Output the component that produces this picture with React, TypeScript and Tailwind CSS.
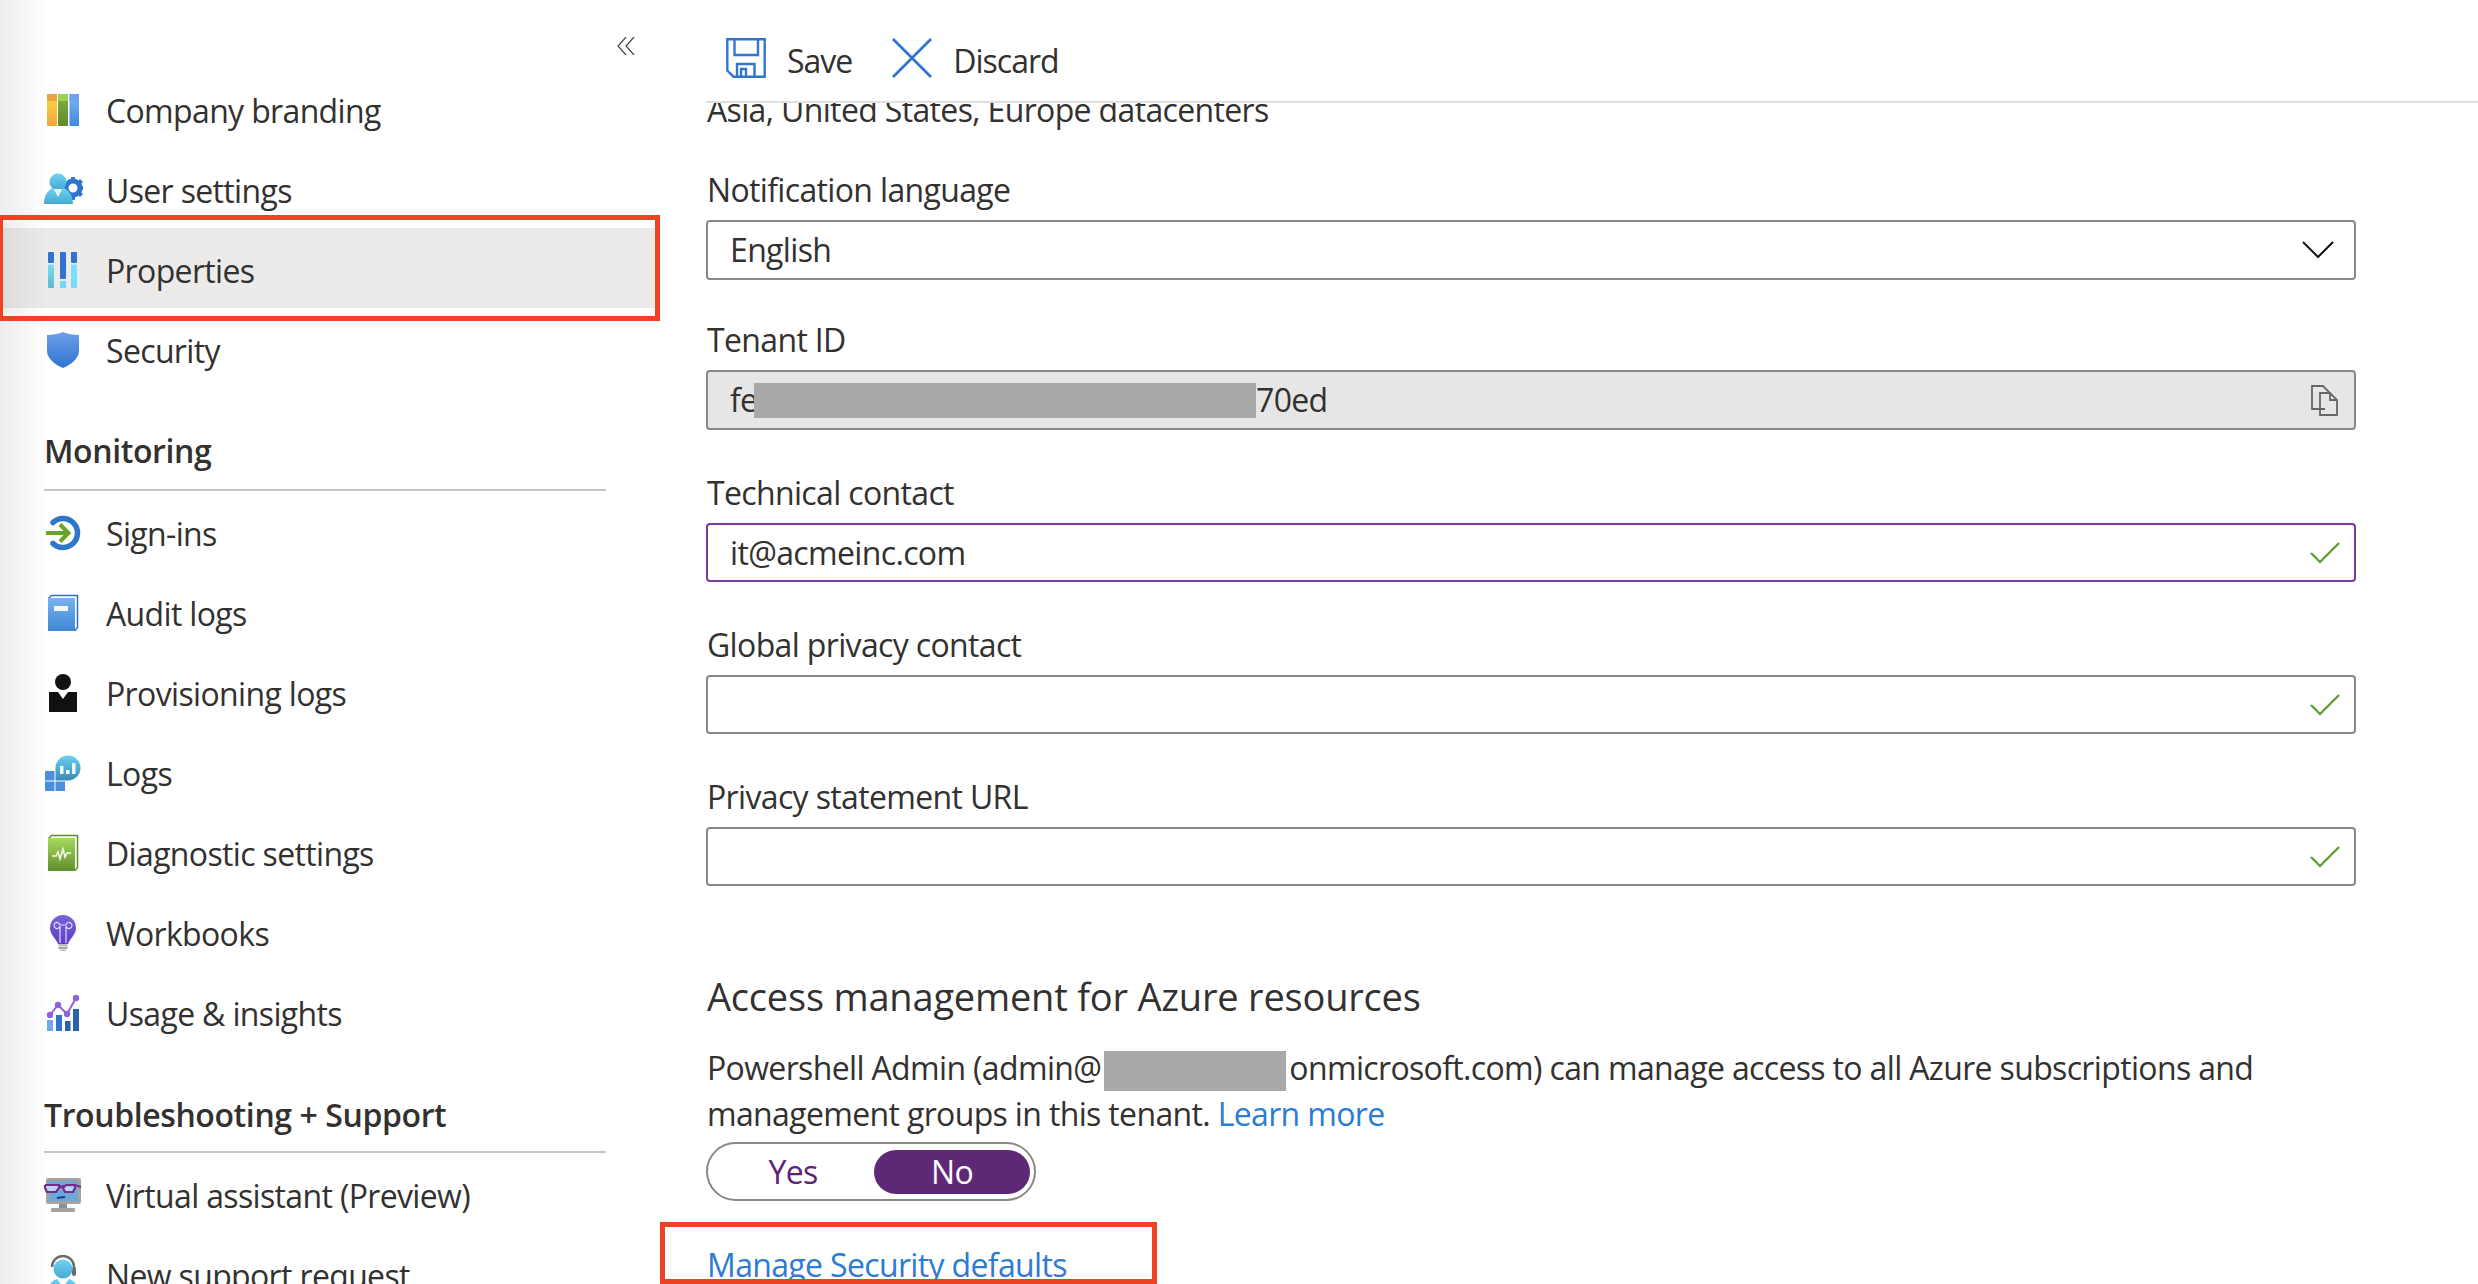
// Azure AD properties blade
import type { ReactNode } from "react"

const Svg = ({ children }: { children: ReactNode }) => (
    <svg width="40" height="40" viewBox="0 0 40 40" className="shrink-0">
        {children}
    </svg>
)

const Grad = ({ id, from, to }: { id: string; from: string; to: string }) => (
    <linearGradient id={id} x1="0" y1="0" x2="0" y2="1">
        <stop offset="0" stopColor={from} />
        <stop offset="1" stopColor={to} />
    </linearGradient>
)

const BrandingIcon = () => (
    <Svg>
        <defs>
            <Grad id="br1" from="#f9dc48" to="#f2a53a" />
            <Grad id="br2" from="#86b13f" to="#5c8a2c" />
            <Grad id="br3" from="#7cb6ee" to="#3d88e0" />
        </defs>
        <rect x="4" y="4" width="10" height="32" rx="1" fill="url(#br1)" />
        <rect x="4" y="4" width="10" height="7" fill="#eba43d" />
        <rect x="15" y="4" width="10" height="32" rx="1" fill="url(#br2)" />
        <rect x="15" y="4" width="10" height="7" fill="#97d350" />
        <rect x="26.500" y="4" width="9.500" height="32" rx="1" fill="url(#br3)" />
        <rect x="26.500" y="4" width="9.500" height="7" fill="#6da3ec" />
    </Svg>
)

const UserSettingsIcon = () => (
    <Svg>
        <defs>
            <Grad id="us1" from="#6fd3f2" to="#45a9d2" />
        </defs>
        <circle cx="30" cy="18" r="7" fill="none" stroke="#2f75cf" strokeWidth="5" />
        <path
            d="M28 7h4v4h-4zM37 9l3 3-3 3-3-3zM37 21l3 3-3 3-3-3zM36.500 16h4v4h-4zM27 26h5v4h-5z"
            fill="#2f75cf"
        />
        <circle cx="15" cy="12" r="8.500" fill="url(#us1)" />
        <path d="M1 34c0-9 5-15 9-16l5 8 5-8c5 1 10 7 10 16z" fill="url(#us1)" />
        <path d="M11 19h8l-4 8z" fill="#e4f6fc" />
    </Svg>
)

const PropertiesIcon = () => (
    <Svg>
        <defs>
            <Grad id="pr1" from="#7fdcf3" to="#5fb7d4" />
            <Grad id="pr2" from="#7ae2fc" to="#74dcf8" />
        </defs>
        <rect x="5" y="2" width="6" height="11" rx="1" fill="#2f75cf" />
        <rect x="5" y="14.500" width="6" height="23.500" rx="1" fill="url(#pr1)" />
        <rect x="17" y="2" width="6" height="27" rx="1" fill="#2f75cf" />
        <rect x="17" y="31" width="6" height="7" fill="#6fd8f5" />
        <rect x="28" y="2" width="6" height="11" rx="1" fill="#2f75cf" />
        <rect x="28" y="14.500" width="6" height="23.500" rx="1" fill="url(#pr2)" />
    </Svg>
)

const ShieldIcon = () => (
    <Svg>
        <defs>
            <Grad id="sh1" from="#6d9fe9" to="#2f74cf" />
        </defs>
        <path d="M4 5c5 0 12-1 16-3 4 2 11 3 16 3v16c0 8-9 14-16 17C13 35 4 29 4 21z" fill="url(#sh1)" />
    </Svg>
)

const SignInIcon = () => (
    <Svg>
        <path
            d="M10 9.500a14.500 14.500 0 1 1 0 21"
            fill="none"
            stroke="#2e76c9"
            strokeWidth="5.500"
            strokeLinecap="round"
        />
        <path d="M3 20h23M17 11.500l8.500 8.500-8.500 8.500" fill="none" stroke="#6aa42c" strokeWidth="4" />
    </Svg>
)

const AuditIcon = () => (
    <Svg>
        <defs>
            <Grad id="au1" from="#78b3ec" to="#3f86d7" />
        </defs>
        <path d="M5.500 5.500L8.500 2.500H34.500V34.500L32 37.500" fill="none" stroke="#2e6fbb" strokeWidth="1.500" />
        <rect x="5" y="5" width="27" height="33" fill="url(#au1)" />
        <rect x="11" y="13" width="14" height="5" fill="#f4f8fd" />
    </Svg>
)

const ProvisioningIcon = () => (
    <Svg>
        <circle cx="20" cy="9" r="8" fill="#111" />
        <path d="M6 19h9l5 7 5-7h9v20H6z" fill="#111" />
    </Svg>
)

const LogsIcon = () => (
    <Svg>
        <defs>
            <Grad id="lg1" from="#68d0ef" to="#3b8bb8" />
        </defs>
        <rect x="2" y="18" width="9.500" height="9.500" fill="#4a8fde" />
        <rect x="2" y="28.500" width="9.500" height="9.500" fill="#4a8fde" />
        <rect x="12.500" y="28.500" width="9.500" height="9.500" fill="#4a8fde" />
        <path d="M12.500 15a12.500 12.500 0 1 1 12.500 12.500H12.500z" fill="url(#lg1)" />
        <rect x="17" y="13" width="3.500" height="8" fill="#f2fbfe" />
        <rect x="23" y="17" width="3.500" height="4" fill="#f2fbfe" />
        <rect x="29" y="10" width="3.500" height="11" fill="#f2fbfe" />
    </Svg>
)

const DiagnosticIcon = () => (
    <Svg>
        <defs>
            <Grad id="dg1" from="#a7da5e" to="#5f8f2e" />
        </defs>
        <path d="M5.500 5.500L8.500 2.500H34.500V34.500L32 37.500" fill="none" stroke="#5e8d2c" strokeWidth="1.500" />
        <rect x="5" y="5" width="27" height="33" fill="url(#dg1)" />
        <path d="M9 23h4l2-4 2 7 3-10 2 8 2-4h4" fill="none" stroke="#f4fae9" strokeWidth="1.600" />
    </Svg>
)

const BulbIcon = () => (
    <Svg>
        <defs>
            <Grad id="bb1" from="#7d63d9" to="#5a3ec6" />
        </defs>
        <path d="M20 2a13 13 0 0 0-13 13c0 7 6 10 8 16h10c2-6 8-9 8-16A13 13 0 0 0 20 2z" fill="url(#bb1)" />
        <path
            d="M17 30V13M23 30V13M17 13a3 3 0 1 1 0-1h6a3 3 0 1 1 0 1"
            fill="none"
            stroke="#e7ddfa"
            strokeWidth="1.200"
        />
        <rect x="15.500" y="31" width="9" height="2.500" fill="#bdbdbd" />
        <rect x="15.500" y="34" width="9" height="2" fill="#a6a6a6" />
        <rect x="17" y="36.500" width="6" height="1.500" fill="#bdbdbd" />
    </Svg>
)

const UsageIcon = () => (
    <Svg>
        <rect x="4" y="27" width="6" height="11" fill="#72a8ea" />
        <rect x="13" y="22" width="6" height="16" fill="#2f75cf" />
        <rect x="22" y="28" width="5.500" height="10" fill="#2a62a6" />
        <rect x="30" y="16" width="6" height="22" fill="#2a62a6" />
        <path d="M7 22L15 12L24 21L33 5" fill="none" stroke="#8d63dd" strokeWidth="2" />
        <circle cx="7" cy="22" r="3.200" fill="#8d63dd" />
        <circle cx="15" cy="12" r="3.200" fill="#8d63dd" />
        <circle cx="24" cy="21" r="3.200" fill="#8d63dd" />
        <circle cx="33" cy="5" r="3.200" fill="#8d63dd" />
    </Svg>
)

const AssistantIcon = () => (
    <Svg>
        <rect x="3" y="3" width="35" height="26" rx="2" fill="#a3a3a3" />
        <rect x="6" y="6" width="29" height="20" fill="#6aa9d8" />
        <rect x="16" y="29" width="8" height="5" fill="#8f8f8f" />
        <rect x="8" y="33" width="24" height="4" rx="1" fill="#a3a3a3" />
        <path
            d="M2 10h14l2 2h3l2-2h9l6 2M2 10v3l2 4h9l3-4V10M20 10v3l2 4h8l2-4v-3"
            fill="#b8d6ec"
            stroke="#7a2a8a"
            strokeWidth="2.200"
        />
        <path d="M14 23l8-1" stroke="#1b3b9a" strokeWidth="2" />
    </Svg>
)

const SupportIcon = () => (
    <Svg>
        <defs>
            <Grad id="sp1" from="#6fd3f2" to="#45a9d2" />
        </defs>
        <path d="M9 12a11 11 0 0 1 22 0v6" fill="none" stroke="#6b6b6b" strokeWidth="2.500" />
        <rect x="29" y="12" width="4" height="9" rx="2" fill="#6b6b6b" />
        <circle cx="20" cy="14" r="9.500" fill="url(#sp1)" />
        <path d="M4 40c0-9 5-15 10-16l6 8 6-8c5 1 10 7 10 16z" fill="url(#sp1)" />
    </Svg>
)

const Row = ({ icon, label, active }: { icon: ReactNode; label: string; active?: boolean }) => (
    <div className={`flex h-[80px] w-[655px] shrink-0 items-center gap-[23px] pl-[43px] pt-[4px] ${active ? "bg-[#edebe9]" : ""}`}>
        {icon}
        <span className="whitespace-nowrap pt-[2px]">{label}</span>
    </div>
)

const SectionHead = ({ title, className }: { title: string; className: string }) => (
    <div className={`ml-[44px] mr-[100px] flex items-start border-b-2 border-[#c8c6c4] font-semibold tracking-[-0.4px] ${className}`}>
        <span className="whitespace-nowrap">{title}</span>
    </div>
)

const Field = ({ label, className, children }: { label: string; className: string; children: ReactNode }) => (
    <div className={`flex flex-col ${className}`}>
        <label className="mb-[8px] pl-[1px] leading-[44px]">{label}</label>
        {children}
    </div>
)

const Check = () => (
    <svg width="30" height="22" viewBox="0 0 30 22" className="shrink-0">
        <path d="M1 11l9 9L29 1" fill="none" stroke="#5c9d2c" strokeWidth="2.200" />
    </svg>
)

const CheckInput = ({ value, focused }: { value?: string; focused?: boolean }) => (
    <div
        className={`flex h-[59px] items-center justify-between rounded-[4px] border-2 pl-[22px] pr-[14px] ${
            focused ? "border-[#7f3a9e]" : "border-[#8a8886]"
        }`}
    >
        <span>{value}</span>
        <Check />
    </div>
)

const App = () => {
    return (
        <div className="relative flex h-[1284px] w-[2478px] overflow-hidden bg-white text-[32px] text-[#323130] font-['Open_Sans',sans-serif] tracking-[-0.65px]">
            {/* Sidebar */}
            <aside className="flex w-[706px] shrink-0 flex-col">
                <div className="flex h-[68px] shrink-0 justify-end pr-[71px] pt-[37px]">
                    <svg width="18" height="18" viewBox="0 0 18 18">
                        <path d="M9 0L1 9l8 9M17 0L9 9l8 9" fill="none" stroke="#444" strokeWidth="1.200" />
                    </svg>
                </div>
                <Row icon={<BrandingIcon />} label="Company branding" />
                <Row icon={<UserSettingsIcon />} label="User settings" />
                <Row icon={<PropertiesIcon />} label="Properties" active />
                <Row icon={<ShieldIcon />} label="Security" />

                <SectionHead title="Monitoring" className="h-[103px] shrink-0 pt-[39px]" />
                <Row icon={<SignInIcon />} label="Sign-ins" />
                <Row icon={<AuditIcon />} label="Audit logs" />
                <Row icon={<ProvisioningIcon />} label="Provisioning logs" />
                <Row icon={<LogsIcon />} label="Logs" />
                <Row icon={<DiagnosticIcon />} label="Diagnostic settings" />
                <Row icon={<BulbIcon />} label="Workbooks" />
                <Row icon={<UsageIcon />} label="Usage & insights" />

                <SectionHead title="Troubleshooting + Support" className="h-[102px] shrink-0 pt-[40px]" />
                <Row icon={<AssistantIcon />} label="Virtual assistant (Preview)" />
                <Row icon={<SupportIcon />} label="New support request" />
            </aside>

            {/* Main blade */}
            <main className="flex min-w-0 flex-1 flex-col">
                <div className="flex h-[103px] shrink-0 items-start border-b-2 border-[#e1dfdd] pl-[20px] pt-[38px] tracking-[-1px]">
                    <svg width="40" height="40" viewBox="0 0 40 40" className="shrink-0">
                        <path
                            d="M1.300 1.300H38.700V38.700H7.500L1.300 32.500zM8.500 1.300V17H32V1.300M11 38.700V26H28.500V38.700M15 38.700V31H20V38.700"
                            fill="none"
                            stroke="#2f76ce"
                            strokeWidth="2.400"
                        />
                    </svg>
                    <span className="ml-[21px] pt-[1px] leading-[44px]">Save</span>
                    <svg width="40" height="40" viewBox="0 0 40 40" className="ml-[40px] shrink-0">
                        <path d="M1 1l38 38M39 1L1 39" fill="none" stroke="#2f76ce" strokeWidth="2.800" />
                    </svg>
                    <span className="ml-[21px] pt-[1px] leading-[44px]">Discard</span>
                </div>

                <div className="min-h-0 flex-1 overflow-hidden pr-[122px]">
                    <p className="-mt-[15px] pl-[1px] leading-[44px]">Asia, United States, Europe datacenters</p>

                    <Field label="Notification language" className="mt-[36px]">
                        <div className="flex h-[60px] items-center justify-between rounded-[4px] border-2 border-[#8a8886] pl-[22px] pr-[20px]">
                            <span>English</span>
                            <svg width="32" height="18" viewBox="0 0 32 18">
                                <path d="M1 1l15 15L31 1" fill="none" stroke="#111" strokeWidth="2" />
                            </svg>
                        </div>
                    </Field>

                    <Field label="Tenant ID" className="mt-[38px]">
                        <div className="flex h-[60px] items-center rounded-[4px] border-2 border-[#8a8886] bg-[#e6e6e6] pl-[22px] pr-[16px]">
                            <span className="w-[24px] whitespace-nowrap">fe</span>
                            <span className="h-[35px] w-[502px] bg-[#a9a9a9]" />
                            <span>70ed</span>
                            <svg width="27" height="31" viewBox="0 0 27 31" className="ml-auto">
                                <path
                                    d="M14 24H1V1h11l7 7v2M9 8h10l7 7v15H9zM19 8v7h7"
                                    fill="none"
                                    stroke="#666"
                                    strokeWidth="1.800"
                                />
                            </svg>
                        </div>
                    </Field>

                    <Field label="Technical contact" className="mt-[41px]">
                        <CheckInput value="it@acmeinc.com" focused />
                    </Field>
                    <Field label="Global privacy contact" className="mt-[41px]">
                        <CheckInput />
                    </Field>
                    <Field label="Privacy statement URL" className="mt-[41px]">
                        <CheckInput />
                    </Field>

                    <h2 className="mt-[84px] pl-[1px] text-[38px] leading-[52px] tracking-[-0.2px]">Access management for Azure resources</h2>
                    <p className="mt-[23px] whitespace-nowrap pl-[1px] leading-[46px]">
                        Powershell Admin (admin@
                        <span className="mx-[3px] inline-block h-[40px] w-[182px] bg-[#a9a9a9] align-middle" />
                        onmicrosoft.com) can manage access to all Azure subscriptions and
                        <br />
                        management groups in this tenant. <a className="text-[#2b7cd3]">Learn more</a>
                    </p>

                    <div className="mt-[5px] flex h-[59px] w-[330px] items-center rounded-full border-2 border-[#8a8886] py-[6px] pl-[6px] pr-[4px]">
                        <span className="flex-1 pr-[2px] text-center text-[#5c2477]">Yes</span>
                        <span className="flex h-[44px] w-[156px] items-center justify-center rounded-full bg-[#5f2877] text-white">
                            No
                        </span>
                    </div>

                    <a className="mt-[42px] block pl-[1px] leading-[44px] text-[#2b7cd3]">Manage Security defaults</a>
                </div>
            </main>

            {/* Left edge shadow */}
            <div className="pointer-events-none absolute inset-y-0 left-0 w-[48px] bg-gradient-to-r from-[#00000012] to-transparent" />

            {/* Annotation boxes */}
            <div className="pointer-events-none absolute left-[-2px] top-[215px] h-[106px] w-[662px] border-[5px] border-[#ee4225]" />
            <div className="pointer-events-none absolute left-[660px] top-[1222px] h-[62px] w-[497px] border-[5px] border-[#ee4225]" />
        </div>
    )
}

export default App
